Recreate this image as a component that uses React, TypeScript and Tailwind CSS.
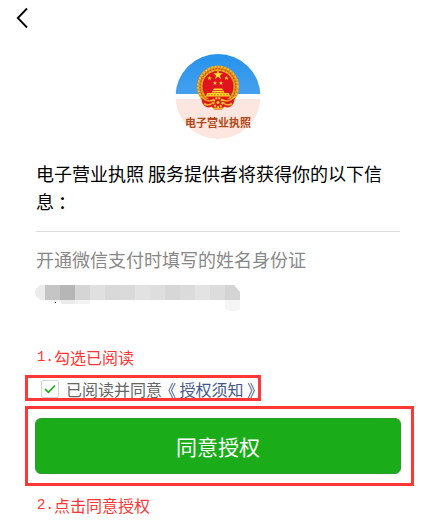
import React from "react";

const mosaic = [
  [0, 10, "#ebebeb"], [10, 15, "#c5c5c5"], [25, 15, "#b6b6b6"], [40, 15, "#d5d5d5"],
  [55, 15, "#e0e0e0"], [70, 15, "#d9d9d9"], [85, 15, "#dadada"], [100, 15, "#e2e2e2"],
  [115, 15, "#dedede"], [130, 15, "#d7d7d7"], [145, 15, "#dbdbdb"], [160, 15, "#e3e3e3"],
  [175, 15, "#dcdcdc"], [190, 15, "#d4d4d4"],
] as const;

function Emblem() {
  return (
    <svg width="86" height="86" viewBox="0 0 86 86" role="img" aria-label="电子营业执照">
      <defs>
        <clipPath id="disc"><circle cx="43" cy="43.500" r="42.500" /></clipPath>
        <linearGradient id="sky" x1="0" y1="0" x2="0" y2="1">
          <stop offset="0" stopColor="#2592ec" />
          <stop offset="1" stopColor="#45a0ee" />
        </linearGradient>
      </defs>
      <g clipPath="url(#disc)">
        <rect width="86" height="86" fill="#fff" />
        <rect width="86" height="41" fill="url(#sky)" />
        <rect y="46" width="86" height="41" fill="#fde6df" />
      </g>
      <g transform="translate(0 1.500)">
        <circle cx="43" cy="32" r="18" fill="none" stroke="#dd8a1c" strokeWidth="6" />
        <circle cx="43" cy="32" r="19.800" fill="none" stroke="#f0bd2c" strokeWidth="2" strokeDasharray="2 1.300" />
        <circle cx="43" cy="32" r="17.800" fill="none" stroke="#c9501a" strokeWidth="1.200" strokeDasharray="1.300 1.700" />
        <circle cx="43" cy="32" r="16.200" fill="none" stroke="#f3b52a" strokeWidth="1.400" strokeDasharray="2 1.500" />
        <circle cx="43" cy="32" r="15.500" fill="#e0141c" />
        <path d="M43 15.500l1.200 3.300h3.500l-2.800 2.200 1 3.400-2.900-2.100-2.900 2.100 1-3.400-2.800-2.200h3.500z" fill="#fbe02c" />
        <g fill="#fbd82c">
          <path d="M34.500 21.500l.6 1.400h1.500l-1.200 1 .5 1.500-1.400-.9-1.400.9.5-1.500-1.200-1h1.500z" />
          <path d="M51.500 21.500l.6 1.400h1.500l-1.200 1 .5 1.500-1.400-.9-1.400.9.5-1.500-1.200-1h1.500z" />
          <path d="M40 26.500l.6 1.400h1.500l-1.200 1 .5 1.500-1.400-.9-1.400.9.5-1.500-1.200-1h1.500z" />
          <path d="M46 26.500l.6 1.400h1.500l-1.200 1 .5 1.500-1.400-.9-1.400.9.5-1.500-1.200-1h1.500z" />
          <path d="M38 35.500l1-1.500h8l1 1.500zM36.500 38l1-1.800h11l1 1.800zM32 38.500h22l1 3.500H31z" />
        </g>
        <path d="M33 40.300h20" stroke="#e67b18" strokeWidth="1" strokeDasharray="2 1" />
        <path d="M26 43c4 2 8 2 13 1h8c5 1 9 1 13-1l-1.500 6c-3 4-6 5-9 3l-3 3h-7l-3-3c-3 2-6 1-9-3z" fill="#dc1a1b" />
        <path d="M26 42c5 5 10 5 13 3M60 42c-5 5-10 5-13 3M29 49c4 3 7 1 9-1M57 49c-4 3-7 1-9-1M38 54h10" fill="none" stroke="#f5b62a" strokeWidth="1.600" />
        <circle cx="43" cy="48" r="4.500" fill="#dc1a1b" stroke="#f7c52c" strokeWidth="2" strokeDasharray="2 1" />
        <circle cx="43" cy="48" r="1.500" fill="#f7c52c" />
      </g>
      <text
        x="43"
        y="74"
        textAnchor="middle"
        className="fill-[#b04a1c] font-['Noto_Sans_CJK_SC',sans-serif] text-[11px] font-bold"
      >
        电子营业执照
      </text>
    </svg>
  );
}

function Note({ step, children }: { step: string; children: React.ReactNode }) {
  return (
    <p className="flex items-center pl-3 text-base leading-6 text-[#ff3535]">
      <span className="w-[17px] font-['Liberation_Mono',monospace] text-sm">{step}</span>
      <span>{children}</span>
    </p>
  );
}

export default function App() {
  return (
    <div className="bg-white font-['Noto_Sans_CJK_SC',sans-serif] text-black">
      <header className="flex h-9 items-center pl-4">
        <button type="button" aria-label="返回">
          <svg width="12" height="22" viewBox="0 0 12 22" fill="none" stroke="#000" strokeWidth="1.800">
            <path d="M11 1.500L1.800 11l9.200 9.500" />
          </svg>
        </button>
      </header>

      <main>
        <section className="px-9">
          <div className="flex justify-center pt-[17px] pb-5">
            <Emblem />
          </div>
          <h1 className="border-b border-[#dcdcdc] pb-4 text-lg leading-7 font-normal">
            {"电子营业执照 服务提供者将获得你的以下信息\u00a0："}
          </h1>
          <p className="pt-[13px] text-lg leading-7 text-[#888]">开通微信支付时填写的姓名身份证</p>
          <svg className="mt-3 -ml-px" width="206" height="27" viewBox="0 0 206 27" aria-hidden="true" shapeRendering="crispEdges">
            <defs>
              <clipPath id="strip"><path d="M5 0H199L205 7V15H5L1 11L0 7L1 4Z" /></clipPath>
            </defs>
            <g clipPath="url(#strip)">
              {mosaic.map(([x, w, fill]) => (
                <rect key={x} x={x} width={w} height="15" fill={fill} />
              ))}
            </g>
            <path d="M10 15h15v2H14z" fill="#f5f5f5" />
            <path d="M25 15h15v4H27z" fill="#ebebeb" />
            <path d="M40 15h15v4H40z" fill="#f3f3f3" />
            <path d="M190 15h15v10l-4 1h-6l-5-2z" fill="#f5f5f5" />
            <rect x="20" y="17" width="1" height="1" fill="#333" />
          </svg>
        </section>

        <section className="pt-[33px] pr-[22px] pl-[25px]">
          <Note step="1.">勾选已阅读</Note>
          <div className="mt-[6px] flex h-[26px] w-[236px] items-center border-[3px] border-[#ff3737] pt-px pl-[13px] text-base leading-5 whitespace-nowrap">
            <span className="mr-[7px] grid size-[18px] shrink-0">
              <input
                id="agree"
                type="checkbox"
                defaultChecked
                className="peer col-start-1 row-start-1 size-[18px] appearance-none rounded-xs border border-[#d5d5d5] bg-white"
              />
              <svg
                className="pointer-events-none invisible col-start-1 row-start-1 peer-checked:visible"
                width="18"
                height="18"
                viewBox="0 0 18 18"
                fill="none"
                stroke="#17ab17"
                strokeWidth="1.600"
              >
                <path d="M4 9l3.400 3.300L14 5.500" />
              </svg>
            </span>
            <label htmlFor="agree" className="text-[#666]">已阅读并同意</label>
            <a href="#terms" className="-ml-0.5 text-[#43598a]">《 授权须知 》</a>
          </div>

          <div className="mt-[5px] border-[3px] border-[#ff3737] py-[9px] pr-[10px] pl-[7px]">
            <button
              type="button"
              className="h-14 w-full rounded-md border border-[#2f9a2f] bg-[#1aad19] text-[21px] leading-8 text-white"
            >
              同意授权
            </button>
          </div>
          <div className="pt-[7px] pb-1">
            <Note step="2.">点击同意授权</Note>
          </div>
        </section>
      </main>
    </div>
  );
}
